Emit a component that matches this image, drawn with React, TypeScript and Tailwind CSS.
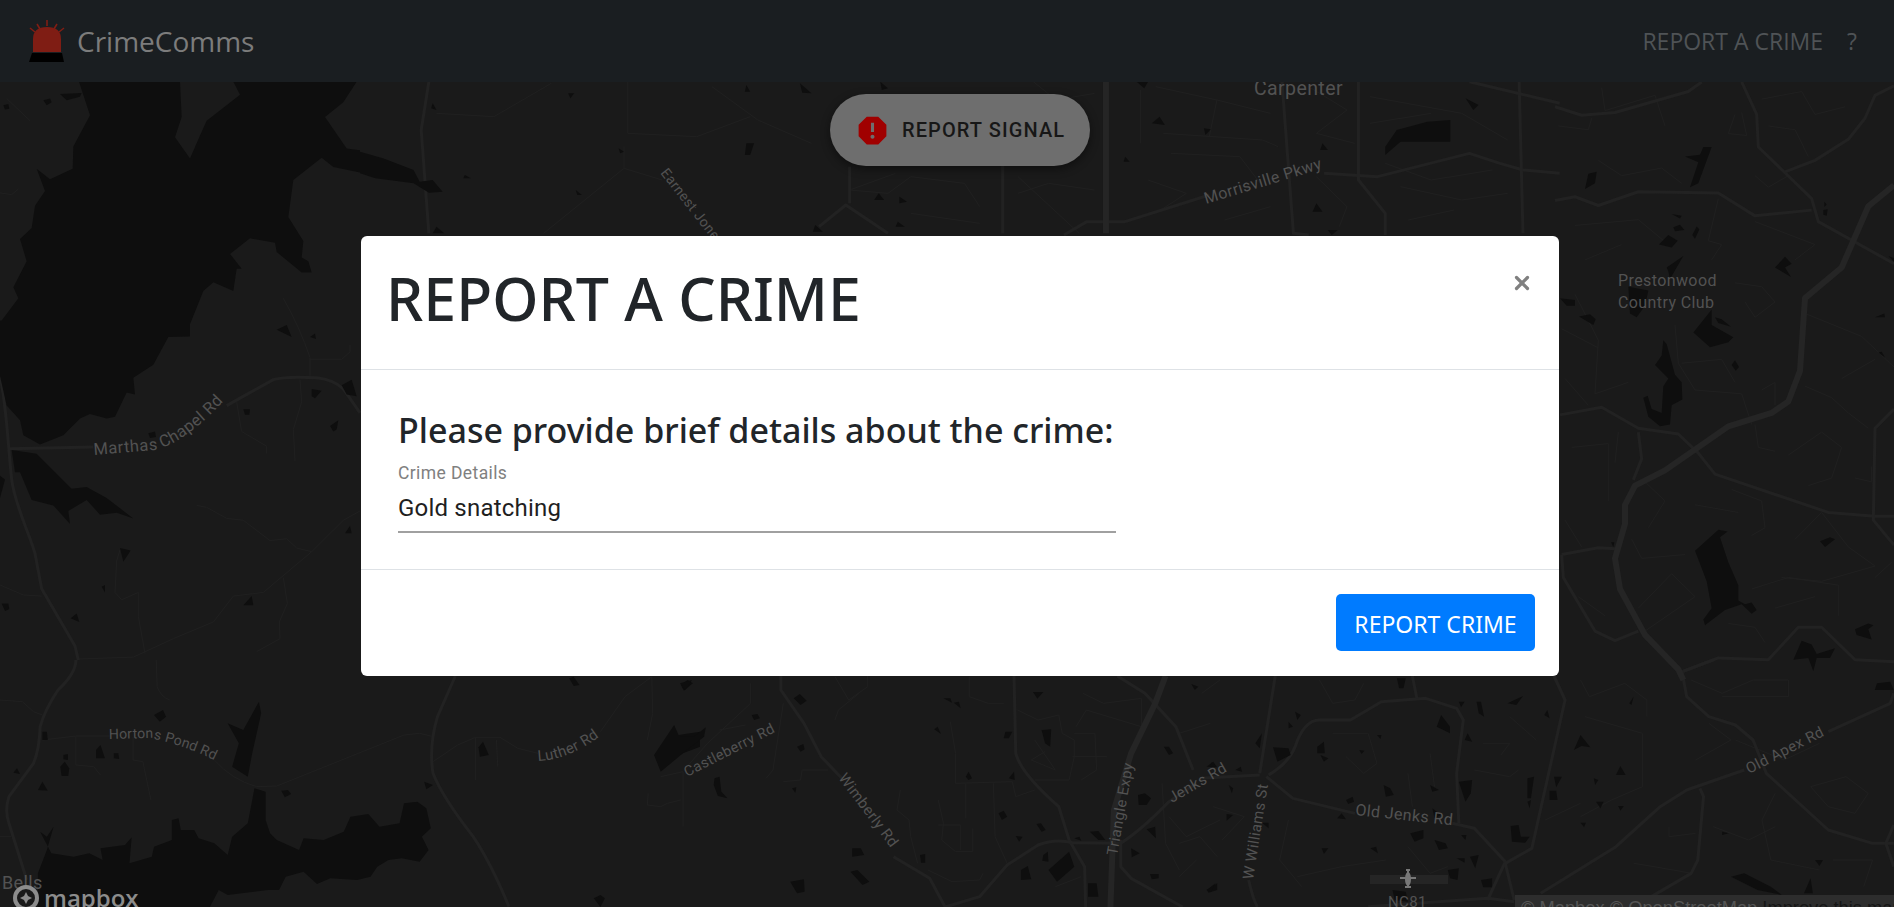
import { X } from "lucide-react";

type Layer = {
  tx: number;
  ty: number;
  sx: number;
  sy: number;
  lakes: string[];
  roads: string[];
  minor: string[];
  thick?: string[];
};

// map traced per region, coordinates are local to each layer
const layers: Layer[] = [
  {
    tx: 0, ty: 80, sx: 1 / 3, sy: 1 / 2.703,
    lakes: [
      "237,5 270,95 220,180 218,240 150,268 110,240 135,300 105,340 95,400 60,430 80,490 40,560 55,590 5,650 0,650 0,800 20,880 60,920 70,960 120,985 190,960 240,915 270,903 320,915 345,910 380,845 405,850 400,805 460,770 505,695 570,693 570,660 610,570 640,547 700,570 710,510 725,510 690,470 750,428 825,440 830,465 905,520 935,520 925,490 905,480 910,435 865,370 880,270 965,210 1000,235 1080,250 1080,190 1040,185 975,100 1030,60 1070,5 700,5 720,40 620,110 600,150 570,212 525,155 545,100 540,5",
      "35,1000 110,1010 215,1105 260,1100 320,1130 400,1185 350,1170 300,1175 260,1135 205,1165 210,1200 160,1150 95,1135 60,1060 45,1060",
      "0,1070 15,1080 0,1130",
      "830,675 860,662 875,695", "930,695 945,685 948,700", "1025,825 1055,810 1070,855 1040,850", "935,835 965,840 945,860 935,855",
      "990,935 1015,920 1010,945 1000,950", "730,890 750,890 748,905 735,905", "360,1265 392,1272 370,1302", "305,1370 315,1365 315,1385",
      "730,1420 755,1395 760,1420", "1035,1225 1050,1205 1055,1225", "5,1415 25,1415 28,1430 15,1435", "212,1455 230,1442 238,1465",
      "130,55 150,50 155,60 140,68", "10,68 25,65 28,78 15,80", "445,955 465,950 468,965 450,968", "180,38 245,35 240,45 200,55",
    ],
    roads: [
      "M0,800 C20,880 25,1000 35,1080 C45,1150 90,1230 105,1280 L125,1375 L225,1530 L235,1568",
      "M30,997 L280,992",
      "M680,880 L820,810 Q860,800 950,805 Q1000,810 1030,835 L1080,900",
    ],
    minor: [
      "M850,590 Q900,670 930,750 L930,800", "M930,755 L1025,755 L1050,735 L1050,715", "M900,810 L905,870 L880,945 L885,1030",
      "M710,870 L725,950 L800,990 L800,1010", "M590,1150 L620,1155 L680,1185 L730,1190 L810,1245 L860,1240 L890,1265 L935,1275 L1030,1190 L1080,1165",
      "M935,1275 L790,1385 L700,1395 L640,1465 L520,1510 L400,1560 L235,1565", "M850,1345 L862,1415 L838,1465 L840,1510 L770,1545",
      "M345,1385 L350,1300 L360,1270", "M345,1385 L365,1405 L415,1385 L415,1450 L435,1550", "M0,1365 L70,1392 L125,1395", "M0,305 L35,310 L55,295", "M20,50 L90,110",
    ],
  },
  {
    tx: 0, ty: 660, sx: 1 / 2.24, sy: 1 / 3,
    lakes: [
      "85,741 85,640 105,570 120,500 105,530 90,515 115,580 165,590 200,580 230,600 225,565 280,555 295,532 290,610 340,590 345,560 385,540 385,480 400,475 405,510 435,510 445,535 480,550 510,585 520,530 555,490 570,385 595,395 595,480 605,520 620,540 670,570 680,535 725,540 770,515 785,470 825,462 850,500 895,490 905,430 935,425 955,445 965,505 945,530 960,570 940,605 900,595 870,600 845,620 830,650 800,660 740,655 710,672 680,635 640,650 625,690 600,690 510,705 490,690 470,741",
      "510,190 545,210 580,125 585,160 565,280 555,350 520,320 535,250",
      "345,165 365,150 372,170 358,185", "215,270 225,255 235,295 215,295", "255,280 265,280 267,297 255,295", "95,215 105,215 107,240 95,240",
      "142,285 152,282 152,300 142,298", "135,320 145,305 155,325 153,348 138,348", "30,338 38,325 45,342", "85,390 95,365 107,392", "630,392 645,390 652,402 638,412",
      "950,365 970,375 955,388", "1072,262 1082,245 1095,285 1075,290", "1330,715 1345,705 1355,715 1345,741", "1275,55 1285,50 1298,75 1285,78", "1525,75 1540,60 1552,70 1532,92",
      "1465,285 1510,195 1520,225 1568,215 1568,260 1530,280 1480,335",
    ],
    roads: [
      "M170,0 Q170,40 130,90 Q100,150 90,200 Q88,270 75,310 L20,410 Q10,450 20,490 L60,660",
      "M1020,48 L980,170 Q960,260 970,340 Q990,410 1060,530 Q1100,610 1140,740",
    ],
    minor: [
      "M0,120 L50,125 L75,155 L95,165", "M95,240 L170,228 L245,228", "M170,228 L170,315 L210,320 L225,345", "M298,230 L298,300 L320,305 L338,420", "M350,0 L352,80 Q360,110 380,120",
      "M480,300 Q520,360 575,380 L620,378 L905,225 L940,220 L965,228", "M970,305 L1025,255 L1065,232 L1120,232 L1160,265 L1205,280", "M1065,232 L1065,360", "M1112,240 L1115,320",
      "M1345,215 L1400,110 L1460,50 L1462,160 L1450,240", "M1480,350 L1530,335 L1530,500", "M1525,420 L1495,430 L1480,440 L1450,435 L1452,400", "M0,530 L25,530",
    ],
  },
  {
    tx: 680, ty: 670, sx: 1 / 2.904, sy: 1 / 3,
    lakes: [
      "0,200 40,200 75,172 70,200 20,240 0,255", "330,85 348,72 368,92 350,105", "340,230 358,222 362,238 350,245", "100,325 115,320 120,365 138,385 110,378 98,345",
      "208,135 225,132 232,145 215,150", "325,355 338,352 335,368", "500,535 525,535 535,555 500,560", "495,605 515,600 550,635 530,645", "320,635 360,628 362,665 340,670",
      "697,555 712,552 712,578 700,578", "830,320 838,305 848,325 838,330", "738,178 748,170 758,192", "765,85 785,85 790,98", "795,98 810,95 815,115", "945,185 965,185 955,205 940,205",
      "955,325 970,305 972,330", "925,430 940,422 950,440 935,450", "1035,462 1048,460 1062,480 1050,485", "975,498 995,500 985,515", "1055,555 1068,545 1070,575 1052,572",
      "990,600 1010,588 1020,628 990,630", "1070,600 1130,545 1145,590 1095,635", "1050,180 1078,178 1075,230 1060,220", "1025,66 1055,66 1038,86", "1185,640 1210,640 1215,680 1185,680",
      "1190,485 1215,483 1235,510 1215,510", "1145,505 1160,500 1165,512", "1330,375 1350,370 1368,385 1355,405 1332,405", "1355,478 1380,470 1382,505", "1310,535 1335,550 1312,562",
      "1365,612 1390,612 1390,625 1370,628", "1405,230 1420,230 1432,250 1420,255", "1485,42 1505,50 1495,60", "1535,290 1545,277 1558,292", "1530,660 1560,640 1560,660 1535,668", "0,40 35,30 15,60",
    ],
    thick: ["M1410,18 L1380,100 L1310,250 L1260,420 L1250,711"],
    roads: [
      "M293,18 L293,60 L360,160 L410,260 L470,325", "M620,560 L725,625 L770,711", "M970,18 L975,250 Q990,310 1100,410 L1130,510 L1175,590 L1178,711",
      "M770,711 L870,680 L950,585 L1040,525 Q1090,505 1140,518 L1280,520 Q1340,480 1420,395 L1500,340", "M1270,18 L1350,70 L1440,170 L1490,300", "M1280,510 L1280,590 L1310,625 L1460,711",
    ],
    minor: [
      "M205,40 L205,100 L80,220 L20,290", "M115,180 L190,165", "M300,100 L270,300 L250,325", "M300,335 L350,330 L355,300 L430,300", "M785,155 L800,250 L800,340 L965,335 L975,380 L1030,360",
      "M830,340 L830,445", "M910,340 L915,500 L950,580", "M640,360 L630,420 L665,450 L670,500 L690,580", "M750,390 L765,460 L760,510 L800,545 L850,545 L850,475", "M750,465 L815,465 L815,540", "M720,600 L790,635 L870,630 L880,610",
      "M980,120 L1040,150 L1100,135 L1110,190 L1145,210 L1145,260 L1130,330 L1030,330", "M1145,190 L1205,190 L1210,300 L1165,330", "M1140,260 L1240,260", "M1030,210 L1090,300 L1020,270 L1060,245", "M1170,70 L1230,100 L1340,85 L1340,170 L1180,120 L1150,170",
      "M840,20 L840,80 L895,100 L940,100", "M450,20 L490,90 L545,50 L545,18", "M450,150 L460,120 L520,70", "M1420,440 L1470,500 L1568,450", "M1450,520 L1510,500 L1560,560", "M1450,620 L1500,570", "M1400,340 L1410,520 L1450,600", "M1450,190 L1540,160", "M1515,70 L1568,30", "M1090,650 L1165,620",
    ],
  },
  {
    tx: 1200, ty: 660, sx: 1 / 2.26, sy: 1 / 3,
    lakes: [
      "445,55 465,55 460,85 450,85", "625,125 635,125 642,170 630,160", "695,130 730,108 715,135", "585,125 598,125 590,142", "785,150 790,175 778,165", "970,130 980,110 975,135",
      "545,165 565,200 565,220 535,200", "605,220 615,245 598,240", "215,155 228,165 220,180", "200,185 210,200 200,205", "125,250 140,220 135,265", "165,262 200,265 205,285 175,305", "265,260 280,245 282,280 265,280", "272,285 290,295 280,305",
      "360,270 372,272 365,282", "400,225 410,225 408,237", "15,320 30,305 38,320", "80,330 92,320 95,335", "65,375 75,385 72,400", "415,375 430,385 438,405 420,410", "520,375 540,390 525,395", "330,420 345,410 348,425 335,432",
      "585,365 615,360 612,400 600,425", "740,355 755,350 748,415 740,415", "800,350 818,350 805,382", "790,392 805,392 808,420 790,420", "740,425 748,420 745,445", "845,270 860,225 882,262 862,258", "890,355 900,360 893,375", "940,345 950,318 962,345",
      "895,425 912,425 905,445", "945,438 958,438 950,452", "860,488 872,488 868,502", "310,475 320,460 330,478", "60,462 75,465 60,482", "140,488 155,488 155,505", "525,445 545,465 530,475", "475,520 505,510 505,535 485,545",
      "530,540 555,550 560,565 540,570", "590,525 602,525 600,540", "702,498 720,495 725,530 745,530 735,548 705,545", "275,565 290,565 280,582", "385,565 398,560 402,580", "580,595 598,595 598,608", "610,590 630,585 622,625", "560,630 585,625 582,660 565,655",
      "635,660 660,655 660,682 640,682", "15,690 35,670 25,695", "1180,515 1195,520 1180,525", "1390,600 1408,600 1400,618", "1200,650 1230,640 1290,680 1315,705 1260,690", "1365,700 1380,655 1385,700", "435,690 465,695 470,725 440,720", "1530,70 1560,65 1568,90 1525,90",
    ],
    thick: [],
    roads: [
      "M170,48 L135,340", "M0,355 L135,345", "M155,345 Q200,310 215,260 Q235,180 270,180 L340,180 L410,125 L510,115 L580,145 L595,180 L580,340 L585,490", "M150,350 L210,415 L350,460",
      "M570,490 L620,505 L690,605 L650,720", "M800,48 L825,120 L750,565 L690,610 L710,720", "M480,48 L490,115", "M110,660 Q120,720 130,741", "M380,740 L650,715 L710,725",
      "M1060,0 L1090,40 L1100,110 L1150,170 L1210,195 L1250,240 L1280,340 L1420,510 L1520,550 L1568,550", "M1090,35 L1160,0", "M1420,215 L1560,130 L1568,100",
      "M1230,330 L1100,390 L1040,440 L940,560 L770,700", "M1130,385 L1138,410 L1125,600 L1110,640 L1020,710", "M1568,495 L1550,550 L1568,620",
    ],
    minor: [
      "M270,60 L300,130 L350,120 L370,70", "M860,60 L880,110 L960,70 L1010,120 L1010,170", "M870,170 L1000,220 L1000,380 L930,420 L860,470", "M1110,60 L1180,100 L1250,60 L1330,60 L1330,110 L1180,110", "M1150,190 L1200,240 L1120,300",
      "M300,220 L380,220 L400,310 L370,340 L330,290", "M520,280 L530,380", "M470,340 L480,440", "M620,330 L700,350 L720,330", "M640,250 L700,250 L680,285", "M200,480 L180,600 L230,680", "M30,440 L100,470 L50,540", "M700,170 L760,240",
      "M1210,240 L1320,300 L1400,250", "M1420,440 L1380,380 L1460,350 L1510,400 L1480,460 L1420,440", "M1300,400 L1270,480 L1290,600 L1400,630", "M1060,500 L1060,530 L1120,520", "M980,610 L1070,630 L1110,640", "M1430,600 L1520,600 L1500,680", "M1160,500 L1240,540 L1300,500",
      "M780,480 L860,430", "M220,650 L320,620 L420,600", "M470,560 L520,640 L560,620",
    ],
  },
  {
    tx: 360, ty: 80, sx: 1 / 1.307, sy: 1 / 3,
    lakes: [
      "0,215 30,235 70,270 78,305 95,300 108,335 90,338 70,310 20,295 0,280",
      "1340,200 1355,150 1395,125 1425,120 1425,185 1360,185 1340,225", "505,190 515,190 510,225 503,225", "272,40 280,40 275,55", "95,70 100,90 93,85", "338,205 345,215 340,220", "137,285 145,295 135,295", "282,330 290,345 284,345",
      "1045,110 1052,135 1035,130", "1103,145 1112,148 1105,165", "1000,230 1006,245 998,245", "1250,370 1258,395 1245,395", "1258,190 1265,210 1255,210", "1445,55 1462,75 1455,90", "1015,5 1030,5 1025,25", "680,5 690,25 682,30", "505,15 510,35 503,35", "575,10 590,40 578,38", "678,340 685,360 672,360", "705,350 715,365 705,370", "703,425 712,440 700,440", "595,435 605,455 592,455", "100,440 110,460 95,460", "1265,450 1278,450 1270,465",
    ],
    roads: [
      "M90,5 L80,150 L90,460", "M920,465 L950,425 L1000,425 L1110,345", "M1260,280 L1330,290 L1450,220 L1490,250 L1520,270 L1568,280", "M1205,5 L1220,460 L1240,465", "M1305,5 L1305,300 L1340,400 L1340,465",
      "M1515,5 L1520,460", "M1450,5 L1568,70", "M600,440 L635,375 L690,460", "M640,260 L640,370", "M840,250 L840,460",
    ],
    thick: ["M975,5 L975,460"],
    minor: [
      "M100,100 L175,110 L250,10", "M350,5 L350,160 L440,170 L510,110", "M460,20 L520,120 L590,190", "M345,265 L395,300", "M240,460 L345,265 L345,200", "M700,280 L640,330 L690,340 L720,290 L790,310 L810,380", "M1040,20 L1120,60 L1190,100", "M1050,160 L1180,180 L1200,200", "M1060,220 L1150,230 L1180,320", "M1240,20 L1290,90 L1250,160 L1300,190",
      "M1320,50 L1440,100 L1500,180", "M1320,130 L1400,100", "M1340,250 L1400,300 L1480,270", "M1360,320 L1440,360 L1500,340", "M1370,420 L1430,390", "M860,340 L900,310 L960,330", "M880,5 L910,60 L960,40", "M1030,300 L1080,340 L1040,400", "M1130,420 L1190,380", "M1250,290 L1290,380 L1280,440", "M1020,30 L1020,190", "M1120,60 L1110,170", "M860,290 L940,460", "M720,400 L810,430",
    ],
  },
  {
    tx: 1555, ty: 80, sx: 1 / 3, sy: 1 / 2.613,
    lakes: [
      "390,200 435,195 445,175 470,175 430,270 405,280 430,215", "90,285 100,245 125,240 120,270", "350,350 380,355 375,362", "355,385 375,378 388,392 360,395", "412,405 425,383 433,390 420,415",
      "312,430 340,405 368,420 350,438", "335,490 385,460 345,520 340,500", "220,540 280,550 270,590 245,620 225,610", "15,570 60,575 60,590 35,590", "72,618 105,612 122,625 115,640",
      "660,490 690,462 710,480 690,490 708,515", "415,660 470,600 470,640 535,672 520,685 465,698", "480,620 500,625 528,645 490,635", "530,745 540,732 552,750 542,760", "325,680 335,690 360,770 380,790 382,835 350,850 345,900 315,905 280,880 265,830 278,825 290,860 320,870 325,800 340,780 300,745 320,720",
      "808,318 815,325 808,332", "805,340 818,338 815,355 805,352", "960,620 988,610 990,620", "970,712 980,710 990,725", "1000,460 1017,465 1017,475", "795,1205 825,1195 840,1200 810,1220", "900,1435 940,1420 955,1425 940,1435 950,1462 905,1450",
      "420,1230 490,1175 518,1180 495,1195 520,1260 550,1320 550,1360 570,1370 590,1365 605,1385 590,1395 560,1370 510,1385 450,1425 445,1410 470,1380 455,1310", "715,1515 740,1465 770,1475 785,1500 840,1485 825,1510 785,1510 775,1545 760,1510", "168,1208 178,1208 175,1220",
    ],
    roads: [
      "M0,70 L80,92 L180,85 L400,30 L440,5", "M560,5 L605,90 L610,175 L770,310 L790,370 L1017,480", "M690,240 L780,210 L880,155 L930,100 L960,40 L1017,15", "M0,315 L60,305 L130,328 L250,292 L490,295 L600,355 L770,340",
      "M15,875 L140,855 L250,910 L370,925 L430,975 L480,1030 L820,1130 L960,1140 L1017,1140", "M250,920 L260,990 L235,1045", "M20,1240 L130,1222 L180,1225", "M20,1240 L25,1300 L120,1440 L180,1465 L250,1440",
      "M385,1545 L490,1510 L640,1515 L730,1430 L800,1430 L900,1515 L1017,1520", "M1017,860 L960,910 L955,1150 L1017,1215",
    ],
    thick: ["M1017,275 L940,330 L860,490 L750,570 L735,760 L700,840 L650,870 L520,905 L330,1020 L240,1060 L210,1110 L210,1160 L180,1250 L195,1330 L270,1450 L370,1540 L385,1568"],
    minor: [
      "M140,20 L150,80 L300,40 L330,120", "M10,120 L100,130 L110,100", "M620,50 L740,30 L780,90 L870,70", "M640,120 L720,130 L760,200", "M540,90 L520,140 L575,145 L560,85", "M130,210 L200,250 L320,230 L380,270", "M600,250 L640,280 L700,250", "M490,310 L460,420 L500,430 L470,470",
      "M60,380 L250,365 L340,430", "M90,470 L200,430", "M600,370 L780,430 L720,470", "M360,640 L370,740 L420,810 L560,820 L590,900", "M380,740 L500,730 L540,790", "M540,530 L620,540 L660,580 L600,620 L570,580", "M750,610 L920,670 L1017,750", "M860,780 L960,730", "M750,800 L830,830 L880,870 L940,910",
      "M620,810 L660,790 L660,850", "M60,560 L130,680 L120,820 L220,790", "M20,650 L130,700", "M30,780 L100,850", "M700,980 L800,920 L860,960 L830,1040 L760,1060", "M600,900 L610,960 L660,970", "M50,960 L160,950 L160,1100", "M190,920 L180,1000", "M270,1050 L330,1100 L280,1170", "M530,1070 L620,1100 L630,1170 L590,1190", "M420,1110 L550,1130",
      "M720,1200 L800,1130 L880,1220 L960,1270 L800,1310 L680,1300", "M900,1040 L950,1050 L950,1010", "M30,1150 L80,1220", "M230,1200 L260,1250 L390,1240", "M250,1380 L350,1290 L420,1350 L270,1440", "M590,1330 L700,1300 L850,1320 L850,1400", "M520,1420 L600,1430 L630,1470", "M70,1350 L150,1400", "M960,1300 L1010,1260", "M660,1380 L780,1350",
    ],
  },
];

const labels = [
  { t: "Carpenter", x: 1254, y: 95, r: 0, s: 19.5 },
  { t: "Earnest Jones", x: 660, y: 173, r: 52, s: 14 },
  { t: "Morrisville Pkwy", x: 1206, y: 204, r: -17, s: 16 },
  { t: "Prestonwood", x: 1618, y: 286, r: 0, s: 16 },
  { t: "Country Club", x: 1618, y: 308, r: 0, s: 16 },
  { t: "Castleberry Rd", x: 687, y: 777, r: -27, s: 14.5 },
  { t: "Wimberly Rd", x: 838, y: 778, r: 53, s: 15 },
  { t: "Triangle Expy", x: 1117, y: 856, r: -80, s: 15 },
  { t: "Jenks Rd", x: 1172, y: 803, r: -30, s: 15 },
  { t: "W Williams St", x: 1253, y: 880, r: -81, s: 15 },
  { t: "Old Jenks Rd", x: 1355, y: 815, r: 6, s: 16 },
  { t: "Old Apex Rd", x: 1749, y: 774, r: -27, s: 15 },
  { t: "Bells", x: 2, y: 889, r: 0, s: 18 },
  { t: "NC81", x: 1388, y: 907, r: 0, s: 15 },
];

const MapCanvas = () => (
  <svg viewBox="0 0 1894 907" className="absolute inset-0 w-[1894px] h-[907px] bg-[#1a1a1a]">
    <defs>
      <path id="marthas" d="M94 455 L156 450 Q190 440 232 392" />
      <path id="hortons" d="M109 739 L150 738 Q185 745 218 762" />
      <path id="luther" d="M538 761 Q570 760 604 733" />
    </defs>
    {layers.map((l, i) => (
      <g key={i} transform={`translate(${l.tx} ${l.ty}) scale(${l.sx} ${l.sy})`}>
        {l.minor.map((d, j) => (
          <path key={j} d={d} fill="none" stroke="#202020" strokeWidth="1" vectorEffect="non-scaling-stroke" />
        ))}
        {l.roads.map((d, j) => (
          <path key={j} d={d} fill="none" stroke="#222222" strokeWidth="3" strokeLinejoin="round" vectorEffect="non-scaling-stroke" />
        ))}
        {l.thick?.map((d, j) => (
          <path key={j} d={d} fill="none" stroke="#252525" strokeWidth="6" strokeLinejoin="round" vectorEffect="non-scaling-stroke" />
        ))}
        {l.lakes.map((p, j) => (
          <polygon key={j} points={p} fill="#0e0e0e" />
        ))}
      </g>
    ))}
    <rect x="1370" y="875" width="78" height="9" fill="#252525" />
    <path d="M1406 870h4M1408 870v17M1405 887h6M1400 878h16" stroke="#777" strokeWidth="2" fill="none" />
    <ellipse cx="1408" cy="879" rx="3" ry="7" fill="#777" />
    <g fontFamily="Roboto, sans-serif" fill="#525252">
      {labels.map((l) => (
        <text key={l.t} x={l.x} y={l.y} fontSize={l.s} letterSpacing="0.4" transform={l.r ? `rotate(${l.r} ${l.x} ${l.y})` : undefined}>
          {l.t}
        </text>
      ))}
      <text fontSize="16.5" letterSpacing="0.4"><textPath href="#marthas">Marthas Chapel Rd</textPath></text>
      <text fontSize="14" letterSpacing="0.2"><textPath href="#hortons">Hortons Pond Rd</textPath></text>
      <text fontSize="15" letterSpacing="0.4"><textPath href="#luther">Luther Rd</textPath></text>
    </g>
  </svg>
);

const Siren = () => (
  <svg viewBox="0 0 36 42" className="w-9 h-[42px]">
    <path d="M4 32 V19 Q4 7 18 7 Q32 7 32 19 V32 Z" fill="#7f1d14" />
    <path d="M3 33 H33 L35 42 H0 Z" fill="#000" />
    <path d="M18 0 V6 M8 4 L11 9 M28 4 L25 9 M1 8 L6 12 M35 8 L30 12" stroke="#7f1d14" strokeWidth="1.6" />
  </svg>
);

const MapboxLogo = () => (
  <div className="absolute left-[12px] top-[884px] flex items-center gap-[4px] text-[#8c8c8c]">
    <svg viewBox="0 0 28 28" className="w-7 h-7">
      <circle cx="14" cy="14" r="11" fill="#1a1a1a" stroke="#8c8c8c" strokeWidth="4" />
      <path d="M14 8 L16 12 L20 14 L16 16 L14 20 L12 16 L8 14 L12 12 Z" fill="#8c8c8c" />
    </svg>
    <span className="font-['Open_Sans',sans-serif] font-semibold text-[24px] leading-7">mapbox</span>
  </div>
);

const Navbar = () => (
  <nav className="relative z-0 flex items-center justify-between h-[82px] pl-[29px] pr-[37px] bg-[#1a1e21] font-['Open_Sans',sans-serif]">
    <div className="flex items-center gap-[12px]">
      <Siren />
      <span className="text-[28px] text-[#7c7c7c]">CrimeComms</span>
    </div>
    <div className="flex items-center gap-[24px] text-[#4f5356] text-[23px]">
      <span>REPORT A CRIME</span>
      <span>?</span>
    </div>
  </nav>
);

const App = () => (
  <div className="relative h-[907px] overflow-hidden bg-[#1a1a1a]">
    <MapCanvas />
    <Navbar />

    <button className="absolute left-[830px] top-[94px] flex items-center w-[260px] h-[72px] pl-[24px] rounded-full bg-[#6e6e6e] shadow-[0_3px_10px_rgba(0,0,0,0.45)] font-['Roboto',sans-serif] font-medium text-[20px] tracking-[1.1px] text-[#171717]">
      <svg viewBox="0 0 24 24" className="w-[37px] h-[37px]">
        <path
          fillRule="evenodd"
          fill="#a00000"
          d="M15.73 3H8.27L3 8.27v7.46L8.27 21h7.46L21 15.73V8.27L15.73 3zM12 17.3c-.72 0-1.3-.58-1.3-1.3 0-.72.58-1.3 1.3-1.3.72 0 1.3.58 1.3 1.3 0 .72-.58 1.3-1.3 1.3zm1-4.3h-2V7h2v6z"
        />
      </svg>
      <span className="ml-[11px]">REPORT SIGNAL</span>
    </button>

    <MapboxLogo />

    <div className="absolute left-[1515px] top-[895px] w-[379px] h-[12px] overflow-hidden bg-[#2d2d2d] pl-[6px] font-['Liberation_Sans',sans-serif] text-[18.3px] leading-[25px] whitespace-nowrap text-[#555555]">
      © Mapbox © OpenStreetMap <span className="text-[#161616]">Improve this map</span>
    </div>

    <div className="absolute inset-0 pl-[361px] pt-[236px]">
      <div className="flex flex-col w-[1198px] h-[440px] rounded-[6px] bg-white font-['Noto_Sans',sans-serif] text-[#212529]">
        <header className="relative h-[134px] border-b border-[#dee2e6] pl-[25px] pt-[24px]">
          <h1 className="text-[59px] font-medium leading-[76px]">REPORT A CRIME</h1>
          <X className="absolute right-[26px] top-[36px] w-[22px] h-[22px] text-[#808080]" strokeWidth={3.5} />
        </header>
        <main className="h-[200px] border-b border-[#dee2e6] pl-[37px] pt-[36px]">
          <h2 className="text-[34px] font-medium leading-[48px]">Please provide brief details about the crime:</h2>
          <div className="w-[718px] h-[79px] pt-[10px] border-b-2 border-[#a0a0a0] font-['Roboto',sans-serif]">
            <div className="text-[17.5px] leading-[18px] text-[#808080] tracking-[0.4px]">Crime Details</div>
            <div className="mt-[11px] text-[24px] leading-[30px] text-[#1f1f1f] tracking-[0.2px]">Gold snatching</div>
          </div>
        </main>
        <footer className="flex justify-end items-start flex-1 pt-[24px] pr-[24px]">
          <button className="w-[199px] h-[57px] pt-[3px] rounded-[5px] bg-[#007bff] text-white text-[23px]">REPORT CRIME</button>
        </footer>
      </div>
    </div>
  </div>
);

export default App;
